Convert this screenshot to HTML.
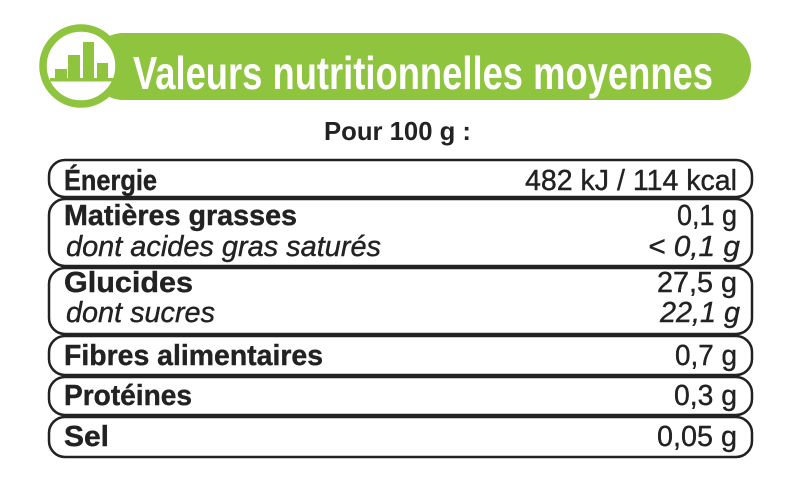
<!DOCTYPE html><html><head><style>body{margin:0;background:#fff}svg{display:block}</style></head><body>
<svg width="793" height="497" viewBox="0 0 793 497" xmlns="http://www.w3.org/2000/svg" font-family="Liberation Sans, Arial, sans-serif">
<rect x="90" y="33" width="661" height="67" rx="33.5" fill="#8fc43f"/>
<circle cx="81" cy="66" r="38" fill="#fff" stroke="#8fc43f" stroke-width="7.5"/>
<g fill="#8fc43f">
<rect x="55" y="69" width="12" height="10"/><rect x="68" y="55" width="12" height="24"/><rect x="83" y="42" width="11" height="37"/><rect x="97" y="63" width="11" height="16"/>
<rect x="50" y="78" width="64" height="3.5"/>
</g>
<text x="133" y="89" font-size="46" font-weight="bold" fill="#fff" textLength="580" lengthAdjust="spacingAndGlyphs">Valeurs nutritionnelles moyennes</text>
<text x="324" y="140" font-size="26" font-weight="bold" fill="#222" textLength="147" lengthAdjust="spacingAndGlyphs">Pour 100 g :</text>
<g fill="none" stroke="#222" stroke-width="2.5">
<rect x="49" y="160" width="703" height="37" rx="16"/>
<rect x="49" y="199" width="703" height="67" rx="16"/>
<rect x="49" y="268" width="703" height="66" rx="16"/>
<rect x="49" y="336" width="703" height="39" rx="16"/>
<rect x="49" y="377" width="703" height="38" rx="16"/>
<rect x="49" y="417" width="703" height="40" rx="16"/>
</g>
<g fill="#222" font-size="29" stroke="#222" stroke-width="0.4">
<text x="64" y="190" font-weight="bold" textLength="93" lengthAdjust="spacingAndGlyphs">Énergie</text>
<text x="525" y="190" textLength="212" lengthAdjust="spacingAndGlyphs">482 kJ / 114 kcal</text>
<text x="64" y="225" font-weight="bold" textLength="233" lengthAdjust="spacingAndGlyphs">Matières grasses</text>
<text x="677" y="225" textLength="60" lengthAdjust="spacingAndGlyphs">0,1 g</text>
<text x="66" y="256" font-style="italic" textLength="315" lengthAdjust="spacingAndGlyphs">dont acides gras saturés</text>
<text x="648" y="256" font-style="italic" textLength="92" lengthAdjust="spacingAndGlyphs">&lt; 0,1 g</text>
<text x="64" y="292" font-weight="bold" textLength="129" lengthAdjust="spacingAndGlyphs">Glucides</text>
<text x="657" y="292" textLength="80" lengthAdjust="spacingAndGlyphs">27,5 g</text>
<text x="66" y="322" font-style="italic" textLength="149" lengthAdjust="spacingAndGlyphs">dont sucres</text>
<text x="660" y="322" font-style="italic" textLength="80" lengthAdjust="spacingAndGlyphs">22,1 g</text>
<text x="64" y="365" font-weight="bold" textLength="259" lengthAdjust="spacingAndGlyphs">Fibres alimentaires</text>
<text x="675" y="365" textLength="62" lengthAdjust="spacingAndGlyphs">0,7 g</text>
<text x="64" y="405" font-weight="bold" textLength="128" lengthAdjust="spacingAndGlyphs">Protéines</text>
<text x="674" y="405" textLength="63" lengthAdjust="spacingAndGlyphs">0,3 g</text>
<text x="64" y="446" font-weight="bold" textLength="45" lengthAdjust="spacingAndGlyphs">Sel</text>
<text x="657" y="446" textLength="80" lengthAdjust="spacingAndGlyphs">0,05 g</text>
</g>
</svg>
</body></html>
